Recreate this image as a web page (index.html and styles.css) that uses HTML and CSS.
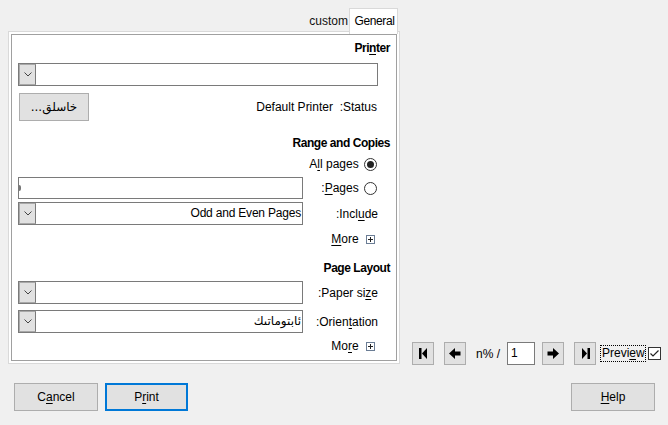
FILE: index.html
```html
<!DOCTYPE html>
<html>
<head>
<meta charset="utf-8">
<link rel="stylesheet" href="styles.css">
</head>
<body>
<div class="top">
  <div class="left">
    <div class="tabs">
      <div class="tab tab-custom">custom</div>
      <div class="tab tab-general">General</div>
    </div>
    <div class="frame">
      <div class="panel">
        <div class="heading h-printer">Pri<u>n</u>ter</div>
        <div class="row r-printer">
          <div class="combo combo-full"><span class="drop"><svg width="8" height="5" viewBox="0 0 8 5"><polyline points="0.5,0.5 4,4 7.5,0.5" fill="none" stroke="#444" stroke-width="1"/></svg></span><span class="value"></span></div>
        </div>
        <div class="row r-status">
          <button class="btn btn-props" dir="rtl">خاسلق...</button>
          <span class="label pre">Default Printer  :Status</span>
        </div>
        <div class="heading h-range">Range and Copies</div>
        <div class="row r-all">
          <span></span>
          <span class="opt">A<u>l</u>l pages <span class="radio checked"></span></span>
        </div>
        <div class="row r-pages">
          <div class="field"><span class="caret"></span></div>
          <span class="opt">:<u>P</u>ages <span class="radio"></span></span>
        </div>
        <div class="row r-include">
          <div class="combo"><span class="drop"><svg width="8" height="5" viewBox="0 0 8 5"><polyline points="0.5,0.5 4,4 7.5,0.5" fill="none" stroke="#444" stroke-width="1"/></svg></span><span class="value">Odd and Even Pages</span></div>
          <span class="label">:Incl<u>u</u>de</span>
        </div>
        <div class="row r-more1">
          <span></span>
          <span class="more"><u>M</u>ore <span class="plus"><svg width="9" height="9" viewBox="0 0 9 9"><rect x="0.5" y="0.5" width="8" height="8" fill="#fff" stroke="#6b7d95"/><path d="M2 4.5h5M4.5 2v5" stroke="#222" stroke-width="1"/></svg></span></span>
        </div>
        <div class="heading h-layout">Page Layout</div>
        <div class="row r-paper">
          <div class="combo"><span class="drop"><svg width="8" height="5" viewBox="0 0 8 5"><polyline points="0.5,0.5 4,4 7.5,0.5" fill="none" stroke="#444" stroke-width="1"/></svg></span><span class="value"></span></div>
          <span class="label">:Paper si<u>z</u>e</span>
        </div>
        <div class="row r-orient">
          <div class="combo"><span class="drop"><svg width="8" height="5" viewBox="0 0 8 5"><polyline points="0.5,0.5 4,4 7.5,0.5" fill="none" stroke="#444" stroke-width="1"/></svg></span><span class="value">ئابتوماتىك</span></div>
          <span class="label">:Orien<u>t</u>ation</span>
        </div>
        <div class="row r-more2">
          <span></span>
          <span class="more">Mo<u>r</u>e <span class="plus"><svg width="9" height="9" viewBox="0 0 9 9"><rect x="0.5" y="0.5" width="8" height="8" fill="#fff" stroke="#6b7d95"/><path d="M2 4.5h5M4.5 2v5" stroke="#222" stroke-width="1"/></svg></span></span>
        </div>
      </div>
    </div>
  </div>
  <div class="nav">
    <button class="nbtn n-first"><svg width="16" height="16" viewBox="0 0 16 16"><rect x="4" y="2" width="2.5" height="11"/><polygon points="12,2 7,7.5 12,13"/></svg></button>
    <button class="nbtn n-prev"><svg width="16" height="16" viewBox="0 0 16 16"><polygon points="2,7.5 8,2 8,5.5 13.5,5.5 13.5,9.5 8,9.5 8,13"/></svg></button>
    <span class="ntext">n% /</span>
    <div class="nfield">1</div>
    <button class="nbtn n-next"><svg width="16" height="16" viewBox="0 0 16 16"><polygon points="14,7.5 8,2 8,5.5 2.5,5.5 2.5,9.5 8,9.5 8,13"/></svg></button>
    <button class="nbtn n-last"><svg width="16" height="16" viewBox="0 0 16 16"><polygon points="5,2 10,7.5 5,13"/><rect x="10.5" y="2" width="2.5" height="11"/></svg></button>
    <span class="preview">Previ<u>e</u>w</span>
    <span class="check"><svg width="11" height="11" viewBox="0 0 11 11"><polyline points="1.5,5.5 4,8 9.5,2.5" fill="none" stroke="#222" stroke-width="1.2"/></svg></span>
  </div>
</div>
<div class="bottom">
  <button class="btn bbtn">C<u>a</u>ncel</button>
  <button class="btn bbtn b-print">P<u>r</u>int</button>
  <button class="btn bbtn b-help"><u>H</u>elp</button>
</div>
</body>
</html>
```
FILE: styles.css
```css
html, body {
  margin: 0;
  padding: 0;
}
body {
  background: #f0f0f0;
  font-family: "Liberation Sans", "DejaVu Sans", sans-serif;
  font-size: 12px;
  color: #000;
  width: 668px;
  height: 425px;
  overflow: hidden;
}
u {
  text-decoration: underline;
  text-underline-offset: 2px;
}
.top {
  display: flex;
  align-items: flex-end;
  padding-top: 8px;
  padding-left: 8px;
}
.left {
  width: 392px;
  display: flex;
  flex-direction: column;
}
.tabs {
  height: 23px;
  display: flex;
  justify-content: flex-end;
  align-items: flex-start;
  padding-right: 2px;
}
.tab {
  box-sizing: border-box;
  white-space: nowrap;
}
.tab-custom {
  height: 20px;
  margin-top: 3px;
  line-height: 20px;
  padding: 0 1px 0 2px;
  color: #111;
}
.tab-general {
  width: 49px;
  height: 26px;
  border: 1px solid #d9d9d9;
  border-bottom: none;
  background: #fff;
  position: relative;
  z-index: 1;
  line-height: 24px;
  text-align: center;
  letter-spacing: -0.4px;
  padding-left: 2px;
}
.frame {
  height: 333px;
  box-sizing: border-box;
  border: 1px solid #d9d9d9;
  background: #fff;
  padding: 2px;
}
.panel {
  height: 100%;
  box-sizing: border-box;
  border: 1px solid #a0a0a0;
  padding: 0 18px 0 6px;
  display: flex;
  flex-direction: column;
}
.heading {
  font-weight: bold;
  text-align: right;
  margin-right: -12px;
  height: 18px;
  line-height: 18px;
  letter-spacing: -0.45px;
}
.row {
  display: flex;
  justify-content: space-between;
  align-items: center;
}
.h-printer { margin-top: 4px; }
.r-printer { margin-top: 6px; height: 23px; }
.r-status { margin-top: 7px; height: 28px; }
.h-range { margin-top: 13px; }
.r-all { margin-top: 3px; height: 18px; }
.r-pages { margin-top: 4px; height: 22px; }
.r-include { margin-top: 3px; height: 23px; }
.r-more1 { margin-top: 5px; height: 18px; }
.h-layout { margin-top: 11px; }
.r-paper { margin-top: 4px; height: 23px; }
.r-orient { margin-top: 6px; height: 23px; }
.r-more2 { margin-top: 4px; height: 18px; }

.combo {
  width: 285px;
  height: 23px;
  box-sizing: border-box;
  border: 1px solid #7a7a7a;
  background: #fff;
  display: flex;
  align-items: stretch;
}
.combo-full {
  width: 360px;
}
.drop {
  width: 17px;
  box-sizing: border-box;
  background: #e1e1e1;
  border: 1px solid #a8a8a8;
  border-right: 1px solid #7a7a7a;
  display: flex;
  align-items: center;
  justify-content: center;
}
.value {
  flex: 1;
  text-align: right;
  padding-right: 1px;
  line-height: 21px;
  white-space: nowrap;
  letter-spacing: -0.2px;
}
.field {
  width: 285px;
  height: 22px;
  box-sizing: border-box;
  border: 1px solid #7a7a7a;
  background: #fff;
  display: flex;
  align-items: center;
}
.caret {
  width: 2px;
  height: 6px;
  border-radius: 0 3px 3px 0;
  background: #777;
}
.label {
  white-space: nowrap;
}
.pre {
  white-space: pre;
  margin-right: 1px;
}
.btn {
  font-family: inherit;
  font-size: 12px;
  color: #000;
  background: #e1e1e1;
  border: 1px solid #adadad;
  box-sizing: border-box;
  padding: 0;
  margin: 0;
}
.btn-props {
  width: 70px;
  height: 28px;
  margin-left: 1px;
  font-family: "DejaVu Sans", sans-serif;
  font-size: 12px;
}
.opt {
  display: flex;
  align-items: center;
  white-space: pre;
}
.radio {
  width: 13px;
  height: 13px;
  box-sizing: border-box;
  border: 1px solid #333;
  border-radius: 50%;
  background: #fff;
  display: inline-flex;
  align-items: center;
  justify-content: center;
  margin-right: 1px;
  margin-left: 2px;
}
.radio.checked::after {
  content: "";
  width: 7px;
  height: 7px;
  border-radius: 50%;
  background: #222;
}
.more {
  display: flex;
  align-items: center;
  white-space: pre;
  margin-right: 3px;
}
.plus {
  display: inline-flex;
  margin-left: 4px;
}
.nav {
  display: flex;
  align-items: center;
  height: 23px;
  margin-bottom: -1px;
  margin-left: 12px;
}
.nbtn {
  width: 22px;
  height: 23px;
  box-sizing: border-box;
  background: #e1e1e1;
  border: 1px solid #adadad;
  padding: 0;
  margin: 0;
  display: flex;
  align-items: center;
  justify-content: center;
}
.nbtn svg { fill: #000; }
.n-prev { margin-left: 10px; }
.ntext { margin-left: 10px; width: 26px; white-space: nowrap; }
.nfield {
  margin-left: 5px;
  width: 28px;
  height: 23px;
  box-sizing: border-box;
  border: 1px solid #7a7a7a;
  background: #fff;
  line-height: 21px;
  padding-left: 3px;
}
.n-next { margin-left: 7px; }
.n-last { margin-left: 10px; }
.preview {
  margin-left: 4px;
  border: 1px dotted #000;
  height: 17px;
  box-sizing: border-box;
  line-height: 15px;
  padding: 0 1px;
  width: 46px;
  white-space: nowrap;
}
.check {
  margin-left: 2px;
  width: 13px;
  height: 13px;
  box-sizing: border-box;
  border: 1px solid #333;
  background: #fff;
  display: flex;
  align-items: center;
  justify-content: center;
}
.bottom {
  display: flex;
  margin-top: 19px;
  padding: 0 13px 0 14px;
}
.bbtn {
  width: 84px;
  height: 28px;
}
.b-print {
  width: 83px;
  margin-left: 7px;
  border: 2px solid #0078d7;
}
.b-help {
  margin-left: auto;
}
```
